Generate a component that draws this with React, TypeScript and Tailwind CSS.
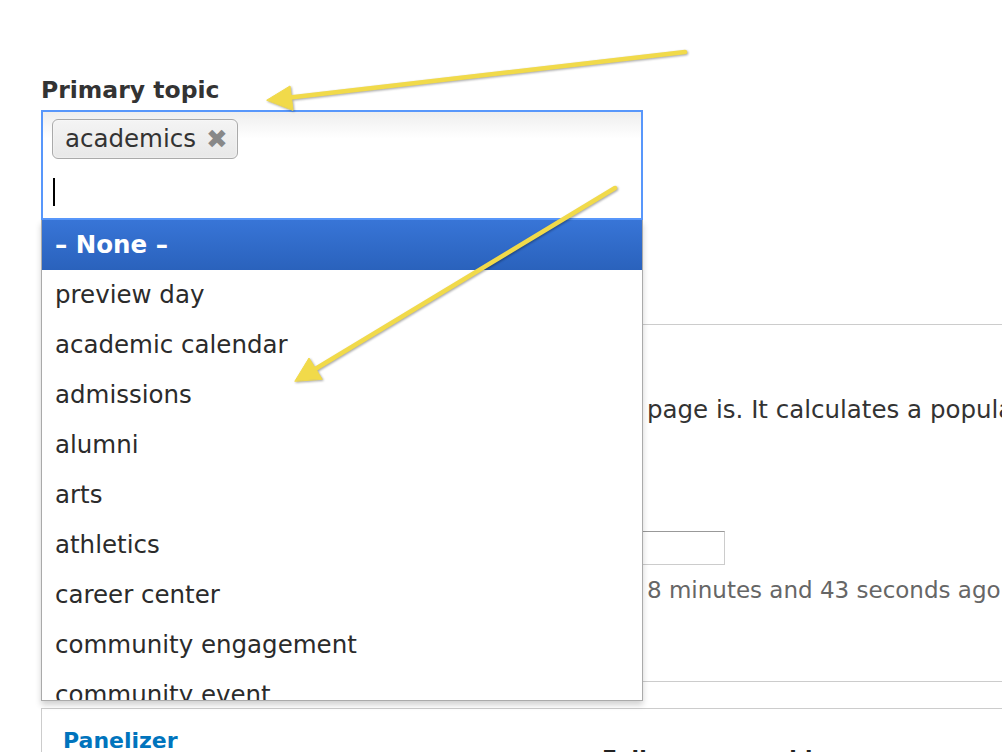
import React from "react";

const topics = [
  "preview day",
  "academic calendar",
  "admissions",
  "alumni",
  "arts",
  "athletics",
  "career center",
  "community engagement",
  "community event",
];

// yellow annotation arrows drawn over the page
function Arrows() {
  return (
    <svg
      className="absolute inset-0 z-20 pointer-events-none drop-shadow-[1px_1px_1px_rgba(0,0,0,0.35)]"
      width="1002"
      height="752"
      viewBox="0 0 1002 752"
    >
      <g fill="#f1da4a" stroke="#f1da4a" strokeLinecap="round" strokeLinejoin="round">
        <line x1="685" y1="52" x2="286" y2="98" strokeWidth="4.5" />
        <polygon points="267,100 290,86 293,110" strokeWidth="1" />
        <line x1="615" y1="188" x2="312" y2="371" strokeWidth="4.5" />
        <polygon points="295,381 309,358 322,379" strokeWidth="1" />
      </g>
    </svg>
  );
}

function ChosenSelect() {
  return (
    <div className="relative w-[602px]">
      <div className="h-[110px] border-2 border-[#5897fb] bg-gradient-to-b from-[#eeeeee] to-white to-[25%] pt-[7px] pl-[9px]">
        <div className="inline-flex items-center h-[40px] rounded-[6px] border border-[#aaa] bg-gradient-to-b from-[#f4f4f4] to-[#e8e8e8] pl-[12px] pr-[9px] shadow-[inset_0_0_2px_white]">
          <span className="text-[24.5px] leading-none text-[#333]">academics</span>
          <span className="ml-[10px] text-[26px] leading-none font-bold text-[#888]">✖</span>
        </div>
        <div className="mt-[19px] ml-[1px] w-[2px] h-[28px] bg-black" />
      </div>
      <div className="absolute left-0 right-0 top-full z-10 h-[481px] overflow-hidden border border-t-0 border-[#aaa] bg-white shadow-[0_4px_6px_rgba(0,0,0,0.18)]">
        <div className="h-[50px] flex items-center pl-[13px] bg-gradient-to-b from-[#3875d7] to-[#2a62bc] text-white font-bold text-[24.5px]">
          – None –
        </div>
        {topics.map((t) => (
          <div key={t} className="h-[50px] flex items-center pl-[13px] text-[24.5px] text-[#2b2b2b] whitespace-nowrap">
            {t}
          </div>
        ))}
      </div>
    </div>
  );
}

export default function App() {
  return (
    <div className="relative w-[1002px] h-[752px] overflow-hidden bg-white text-[#333] font-['DejaVu_Sans',sans-serif]">
      <div className="pl-[41px] pt-[76px]">
        <label className="block text-[23.5px] font-bold leading-[28px] mb-[6px] text-[#333]">
          Primary topic
        </label>
        <ChosenSelect />

        {/* meta / popularity settings, mostly hidden under the open dropdown */}
        <div className="mt-[104px] w-[1000px] h-[358px] border border-[#ccc] border-r-0">
          <div className="mt-[70px] ml-[605px] text-[24.5px] leading-[30px] whitespace-nowrap">
            page is. It calculates a popularity score for the content
          </div>
          <input
            className="block mt-[106px] ml-[483px] w-[200px] h-[34px] border border-[#ccc] border-t-[#999]"
            readOnly
          />
          <div className="mt-[10px] ml-[605px] text-[23px] leading-[30px] text-[#666] whitespace-nowrap">
            8 minutes and 43 seconds ago
          </div>
        </div>

        <div className="mt-[26px] w-[1000px] h-[100px] border border-[#ccc] border-r-0 flex">
          <div className="w-[560px] pl-[21px] pt-[17px]">
            <a className="text-[22px] leading-[30px] font-bold text-[#0074bd]">Panelizer</a>
          </div>
          <div className="pt-[35px] text-[22px] leading-[30px] font-bold text-[#222] whitespace-nowrap">
            Full page override
          </div>
        </div>
      </div>
      <Arrows />
    </div>
  );
}
